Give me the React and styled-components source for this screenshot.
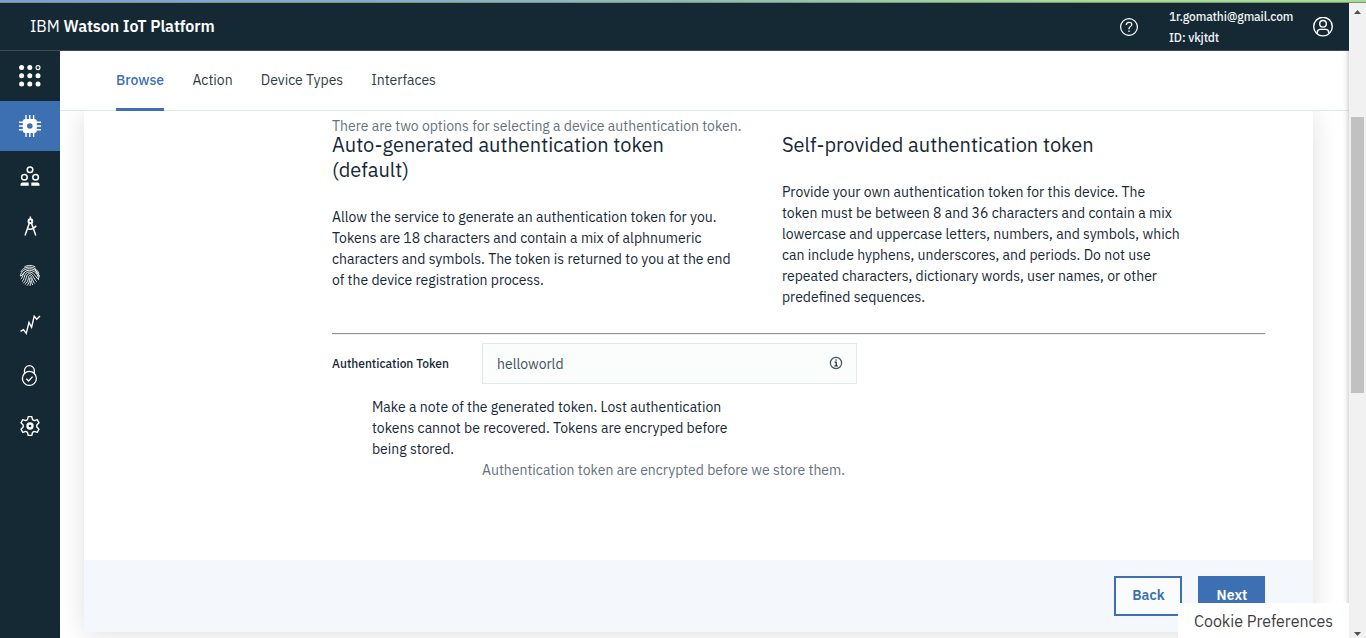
import React from "react";
import styled, { createGlobalStyle, css } from "styled-components";

const GlobalStyle = createGlobalStyle`
  * { box-sizing: border-box; }
  body {
    margin: 0;
    overflow: hidden;
    background: #fff;
    color: #152935;
    font-family: "IBM Plex Sans", Roboto, "Liberation Sans", sans-serif;
    font-size: 14px;
  }
  h3, p { margin: 0; font-weight: 400; }
`;

const Window = styled.div`
  height: 638px;
  display: flex;
  flex-direction: column;
`;
const LoadingStrip = styled.div`
  flex: none;
  height: 3px;
  border-bottom: 1px solid #86907a;
  background: linear-gradient(90deg, #7b9ddb, #8fbcb8 50%, #a3dd91 80%);
`;
const Viewport = styled.div`
  flex: 1;
  min-height: 0;
  display: flex;
`;
const Page = styled.div`
  flex: 1;
  min-width: 0;
  display: flex;
  flex-direction: column;
  position: relative;
`;

const Header = styled.header`
  flex: none;
  height: 48px;
  display: flex;
  align-items: center;
  padding: 0 16px 0 30px;
  background: #152935;
  border-bottom: 1px solid #3c4a50;
  color: #fff;
`;
const Brand = styled.div`
  flex: 1;
  font-size: 16px;
  letter-spacing: -0.06px;
  padding-bottom: 1px;
  b { font-weight: 600; }
`;
const Account = styled.div`
  width: 144px;
  margin-left: 30px;
  font-size: 12px;
  font-weight: 500;
  line-height: 21px;
  color: #f0f3f5;
`;

const Body = styled.div`
  flex: 1;
  min-height: 0;
  display: flex;
`;
const Sidebar = styled.nav`
  flex: none;
  width: 60px;
  background: #152935;
  color: #fff;
`;
const SideItem = styled.div`
  height: 50px;
  display: flex;
  align-items: center;
  justify-content: center;
  ${(p) => p.$active && css`background: #3d70b2;`}
`;
const Main = styled.main`
  flex: 1;
  min-width: 0;
  display: flex;
  flex-direction: column;
`;
const Tabs = styled.div`
  flex: none;
  height: 60px;
  display: flex;
  gap: 28.4px;
  padding-left: 56px;
  border-bottom: 1px solid #dfeaea;
`;
const Tab = styled.div`
  width: ${(p) => p.$w}px;
  height: 60px;
  line-height: 59px;
  white-space: nowrap;
  color: #2c3e49;
  ${(p) => p.$active && css`
    color: #3d70b2;
    font-weight: 500;
    border-bottom: 3px solid #3d70b2;
  `}
`;
const Scroller = styled.div`
  flex: 1;
  min-height: 0;
  overflow: hidden;
  padding: 0 36px 0 24px;
`;
const Card = styled.section`
  height: 521px;
  display: flex;
  flex-direction: column;
  box-shadow: 0 2px 24px rgba(0, 0, 0, 0.13);
  background: #fff;
`;
const CardContent = styled.div`
  flex: 1;
  padding: 5px 48px 0 248px;
`;
const Line = styled.span`
  display: block;
  white-space: nowrap;
  letter-spacing: ${(p) => p.$track || 0}px;
`;
const Intro = styled.p`
  line-height: 21px;
  margin-bottom: -5px;
  color: #66727b;
`;
const Options = styled.div`
  display: grid;
  grid-template-columns: 450px 1fr;
`;
const OptionTitle = styled.h3`
  font-size: 20px;
  line-height: 25px;
  margin-bottom: 25px;
`;
const Paragraph = styled.p`
  line-height: 21px;
`;
const Divider = styled.div`
  height: 2px;
  margin-top: 25px;
  background: #949494;
  border-bottom: 1px solid #eee;
`;
const Field = styled.div`
  display: flex;
  align-items: center;
  margin-top: 8px;
`;
const Label = styled.label`
  width: 150px;
  font-size: 12px;
  font-weight: 500;
`;
const TokenBox = styled.div`
  width: 375px;
  height: 41px;
  display: flex;
  align-items: center;
  justify-content: space-between;
  padding: 1px 13px 0 14px;
  border: 1px solid #dfeaea;
  background: #fbfcfc;
  color: #42525c;
  svg { margin-bottom: 2px; }
`;
const Note = styled(Paragraph)`
  margin: 13px 0 0 40px;
`;
const Hint = styled(Paragraph)`
  margin-left: 150px;
  color: #66727b;
`;
const Footer = styled.footer`
  height: 72px;
  display: flex;
  justify-content: flex-end;
  gap: 16px;
  padding: 16px 48px 0 0;
  background: #f4f7fb;
`;
const Button = styled.div`
  width: ${(p) => p.$w}px;
  height: 40px;
  padding-left: 1px;
  border: 2px solid #3d70b2;
  line-height: 35px;
  text-align: center;
  font-weight: 600;
  letter-spacing: 0.1px;
  color: ${(p) => (p.$primary ? "#fff" : "#3d70b2")};
  background: ${(p) => (p.$primary ? "#3d70b2" : "#f9fbfd")};
`;
const CookieBar = styled.div`
  position: absolute;
  right: 0;
  bottom: 0;
  width: 171px;
  height: 35px;
  padding-left: 16px;
  line-height: 37px;
  font-size: 16px;
  white-space: nowrap;
  background: #fff;
  color: #3f3f3f;
`;
const EdgeShade = styled.div`
  position: absolute;
  right: 0;
  top: 48px;
  bottom: 35px;
  width: 7px;
  background: linear-gradient(90deg, rgba(0,0,0,0), rgba(0,0,0,0.03) 50%, rgba(0,0,0,0.14));
`;
const Scrollbar = styled.div`
  flex: none;
  width: 17px;
  display: flex;
  flex-direction: column;
  align-items: center;
  padding: 7px 0 2px;
  background: #f1f1f1;
`;
const Thumb = styled.div`
  width: 13px;
  height: 276px;
  margin: 103px 0 auto;
  background: #c1c1c1;
`;

const Svg = ({ w = 24, h = w, box, sw = 1.4, children }) => (
  <svg width={w} height={h} viewBox={box || `0 0 ${w} ${h}`} fill="none" stroke="currentColor" strokeWidth={sw}>
    {children}
  </svg>
);

const AppsIcon = () => (
  <Svg>
    {[3.6, 11.8, 20].map((y) => [3.6, 11.8, 20].map((x) =>
      x === 20 && y === 3.6
        ? <circle key={x + y * 30} cx={x} cy={y} r="2" strokeWidth="1.1" />
        : <circle key={x + y * 30} cx={x} cy={y} r="2.5" fill="currentColor" stroke="none" />
    ))}
  </Svg>
);
const ChipIcon = () => (
  <Svg sw={1.4}>
    <path d="M8 1v22M11.8 1v22M15.6 1v22M1 8.2h22M1 12h22M1 15.8h22" />
    <rect x="4.8" y="5" width="14" height="14" rx="2.5" fill="currentColor" stroke="none" />
    <circle cx="11.8" cy="12" r="2.8" fill="#3d70b2" stroke="none" />
  </Svg>
);
const UsersIcon = () => (
  <Svg sw={1.5}>
    <circle cx="12" cy="5.7" r="2.8" />
    <circle cx="6.4" cy="13.2" r="2.8" />
    <circle cx="17.6" cy="13.2" r="2.8" />
    <path d="M2.5 21.8v-1.4a2 2 0 0 1 2-2h6.2v3.4zM13.3 21.8v-3.4h6.2a2 2 0 0 1 2 2v1.4z" fill="currentColor" stroke="none" />
  </Svg>
);
const CompassIcon = () => (
  <Svg sw={1.5}>
    <path d="M12.4 2.5v3M11.4 9 7 21.5M13.4 9 17.8 21.5M9.2 14.6c3 1.2 6.4.2 9-2.9" />
    <circle cx="12.4" cy="7.2" r="1.9" strokeWidth="1.9" />
  </Svg>
);
const FingerprintIcon = () => (
  <Svg sw={0.9} box="0 .6 24 24">
    <path d="M6.3 3.600C9.500 1.600 14 1.500 17.300 3.600M2.900 8.500C5 4.500 8 3.700 11.500 3.700c4.500 0 8 2.500 9.400 6.500M2.300 12.500c1-5 4.500-7.200 9-7.200 5.500 0 9.300 3.500 10 8.700" />
    <path d="M2.800 15.800c2.500-1.500 1.400-8.900 8.500-8.900 5.500 0 9 4 9.300 9.600M3.900 18.200c3.400-2.200 1.600-9.600 7.300-9.600 4.600 0 5.900 4.400 8.800 7.200M5.300 19.900c4-3.200 2.200-9.600 6.100-9.600 3.700 0 4 5 7.200 7.900M6.900 21.100c4.600-3.600 2.700-9 4.900-9 2.400 0 2 4.900 4.900 8M9 22.200c3.600-3.800 2-8 3.100-8 1.500 0 .6 4.200 2.700 7.400M11.900 22.500c.6-1.600.6-3 .2-5" />
    <path d="M8.400 7.500c-3 1.500-3.700 4-5.800 5.500M17 5.500c1.500 3 1.500 5 4.800 7" />
  </Svg>
);
const TrendIcon = () => (
  <Svg sw={1.4} box="0 1.300 24 24">
    <path d="m2.5 18.700 3-1.700 2.700 3.600L11 9.700l2.600 4.900 2.600-11.100 2.600 3L22 3.300" />
  </Svg>
);
const LockIcon = () => (
  <Svg sw={1.3}>
    <circle cx="11.4" cy="14.4" r="7" />
    <path d="M6.5 9.400V6.600a4.900 4.900 0 0 1 9.800 0v2.800M8.300 14.700l2.300 2.300 4-4.400" />
  </Svg>
);
const GearIcon = () => (
  <Svg sw={1.4}>
    <path d="M10.200 2.600h3.600l.7 3 1.800 1 2.900-.9 1.800 3.100-2.200 2.100v2.200l2.200 2.100-1.800 3.100-2.900-.9-1.800 1-.7 3h-3.600l-.7-3-1.800-1-2.900.9L3 15.200l2.200-2.100v-2.200L3 8.800l1.800-3.100 2.900.9 1.800-1z" strokeLinejoin="round" />
    <circle cx="12" cy="12" r="2.5" strokeWidth="2.4" />
  </Svg>
);
const HelpIcon = () => (
  <Svg w={20} sw={1.2}>
    <circle cx="10" cy="10" r="8.4" />
    <path d="M7.300 8c0-3.600 5.500-3.500 5.500-.4 0 2-2.800 2-2.800 4.200v.4M10 13.500v1.600" strokeWidth="1.3" />
  </Svg>
);
const UserIcon = () => (
  <Svg w={20} sw={1.4} box="0 .4 20 20">
    <circle cx="10" cy="10" r="9.3" />
    <circle cx="10" cy="7.2" r="3.3" />
    <path d="M4.300 16.800v-1c0-2 1.200-3 3-3h5.400c1.800 0 3 1 3 3v1" />
  </Svg>
);
const InfoIcon = () => (
  <Svg w={14} sw={1.2}>
    <circle cx="7" cy="7" r="5.6" />
    <path d="M5.600 6.200h1.600v3.600M5.300 10h3.600M6.300 4h1.500" stroke="#152935" />
  </Svg>
);
const Arrow = ({ up }) => (
  <svg width="7" height="4" viewBox="0 0 7 4" fill="#505050">
    <path d={up ? "M0 4 3.500 0 7 4z" : "M0 0h7L3.500 4z"} />
  </svg>
);

const sideIcons = [AppsIcon, ChipIcon, UsersIcon, CompassIcon, FingerprintIcon, TrendIcon, LockIcon, GearIcon];
const tabs = [["Browse", 48], ["Action", 40], ["Device Types", 82], ["Interfaces", 66]];
const autoText = [
  "Allow the service to generate an authentication token for you.",
  "Tokens are 18 characters and contain a mix of alphnumeric",
  "characters and symbols. The token is returned to you at the end",
  "of the device registration process.",
];
const selfText = [
  "Provide your own authentication token for this device. The",
  "token must be between 8 and 36 characters and contain a mix",
  "lowercase and uppercase letters, numbers, and symbols, which",
  "can include hyphens, underscores, and periods. Do not use",
  "repeated characters, dictionary words, user names, or other",
  "predefined sequences.",
];
const noteText = [
  "Make a note of the generated token. Lost authentication",
  "tokens cannot be recovered. Tokens are encryped before",
  "being stored.",
];
const Lines = ({ items }) => items.map((text) => <Line key={text}>{text}</Line>);

export default function App() {
  return (
    <Window>
      <GlobalStyle />
      <LoadingStrip />
      <Viewport>
        <Page>
          <Header>
            <Brand>IBM <b>Watson IoT Platform</b></Brand>
            <HelpIcon />
            <Account>
              <Line $track={-0.13}>1r.gomathi@gmail.com</Line>
              <Line $track={-0.13}>ID: vkjtdt</Line>
            </Account>
            <UserIcon />
          </Header>
          <Body>
            <Sidebar>
              {sideIcons.map((Icon, i) => <SideItem key={i} $active={i === 1}><Icon /></SideItem>)}
            </Sidebar>
            <Main>
              <Tabs>
                {tabs.map(([name, w], i) => (
                  <Tab key={name} $w={w} $active={i === 0}>{name}</Tab>
                ))}
              </Tabs>
              <Scroller>
                <Card>
                  <CardContent>
                    <Intro>There are two options for selecting a device authentication token.</Intro>
                    <Options>
                      <div>
                        <OptionTitle>
                          <Lines items={["Auto-generated authentication token", "(default)"]} />
                        </OptionTitle>
                        <Paragraph><Lines items={autoText} /></Paragraph>
                      </div>
                      <div>
                        <OptionTitle>Self-provided authentication token</OptionTitle>
                        <Paragraph><Lines items={selfText} /></Paragraph>
                      </div>
                    </Options>
                    <Divider />
                    <Field>
                      <Label>Authentication Token</Label>
                      <TokenBox><span>helloworld</span><InfoIcon /></TokenBox>
                    </Field>
                    <Note><Lines items={noteText} /></Note>
                    <Hint>Authentication token are encrypted before we store them.</Hint>
                  </CardContent>
                  <Footer>
                    <Button $w={68}>Back</Button>
                    <Button $w={67} $primary>Next</Button>
                  </Footer>
                </Card>
              </Scroller>
            </Main>
          </Body>
          <EdgeShade />
          <CookieBar>Cookie Preferences</CookieBar>
        </Page>
        <Scrollbar>
          <Arrow up />
          <Thumb />
          <Arrow />
        </Scrollbar>
      </Viewport>
    </Window>
  );
}
